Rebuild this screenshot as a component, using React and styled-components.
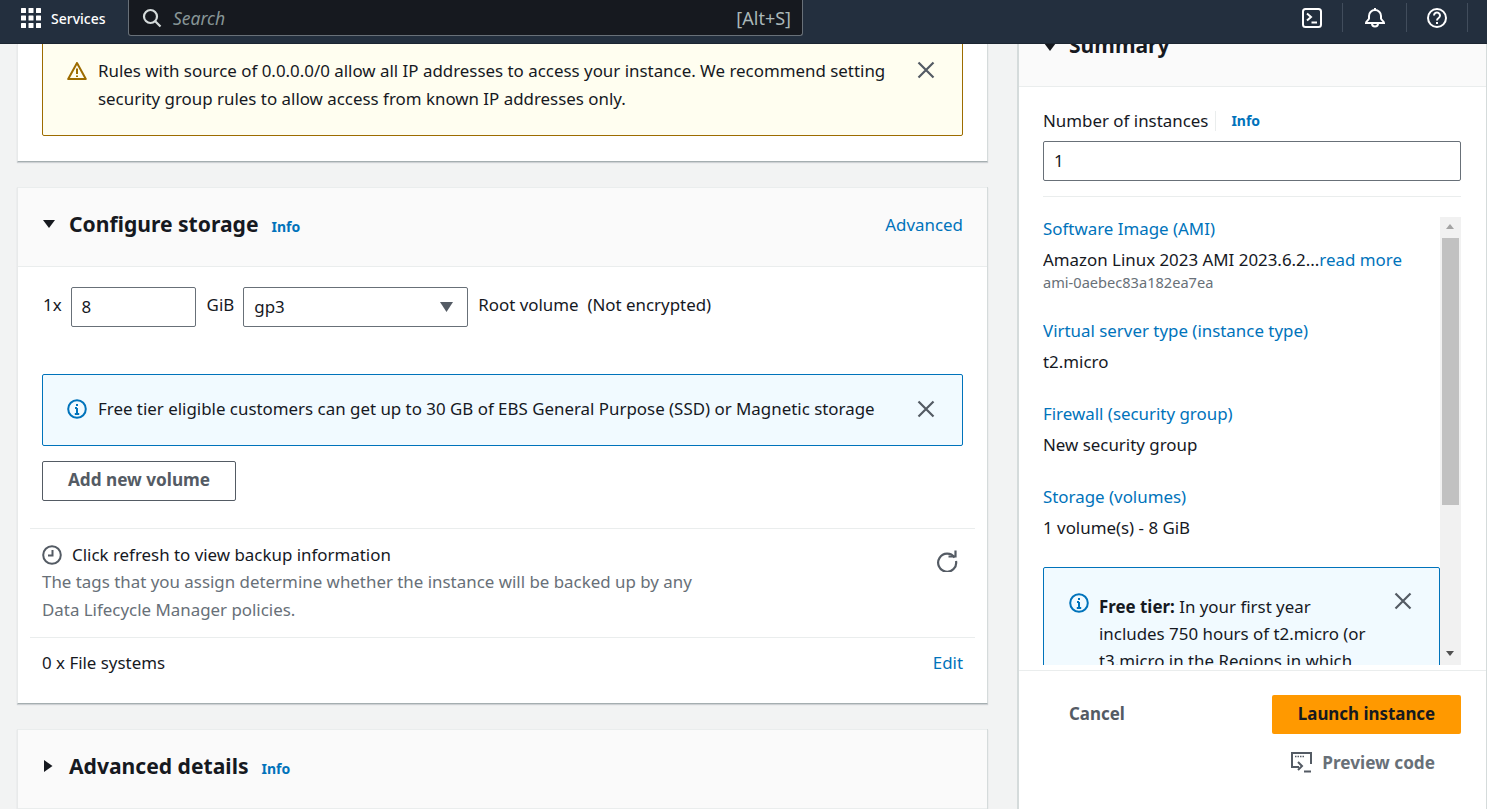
import React from "react";
import styled, { createGlobalStyle } from "styled-components";

const Global = createGlobalStyle`
  html, body { margin: 0; padding: 0; height: 100%; overflow: hidden; background: #f2f3f3; }
  * { box-sizing: border-box; }
  body { font-family: "Noto Sans", "Open Sans", sans-serif; font-size: 16.9px; color: #16191f; }
`;

const Page = styled.div`
  width: 1487px;
  height: 809px;
  overflow: hidden;
  display: flex;
  flex-direction: column;
`;

const Nav = styled.header`
  position: relative;
  z-index: 2;
  flex: none;
  height: 44px;
  background: #232f3e;
  border-bottom: 1px solid #1b2531;
  display: flex;
  align-items: flex-start;
  color: #fff;
`;
const ServicesButton = styled.div`
  width: 128px;
  height: 36px;
  padding-left: 21px;
  display: flex;
  align-items: center;
  gap: 10px;
  font-size: 14px;
  font-weight: 500;
`;
const SearchBox = styled.div`
  width: 675px;
  height: 36px;
  background: #16191f;
  border: 1px solid #687078;
  border-top: 0;
  border-radius: 0 0 3px 3px;
  display: flex;
  align-items: center;
  padding: 0 11px 0 13px;
`;
const SearchHint = styled.span`
  flex: 1;
  margin-left: 11px;
  font-style: italic;
  font-size: 17.5px;
  color: #879596;
`;
const Shortcut = styled.span`
  font-size: 18px;
  color: #aab7b8;
`;
const NavIcons = styled.div`
  margin-left: auto;
  display: flex;
  height: 32px;
  margin-right: 19px;
`;
const NavIcon = styled.div`
  width: ${(p) => p.$width}px;
  height: 29px;
  margin-top: 3px;
  border-right: 1px solid #414d5c;
  display: flex;
  align-items: center;
  justify-content: center;
`;

const Body = styled.main`
  flex: 1;
  min-height: 0;
  display: flex;
  align-items: flex-start;
  padding-left: 17px;
`;
const LeftColumn = styled.div`
  width: 971px;
  flex: none;
  display: flex;
  flex-direction: column;
  gap: 25px;
`;
const Card = styled.section`
  background: #fff;
  border-right: 1px solid #d5dbdb;
  border-left: 1px solid #e8eaea;
  border-bottom: 1px solid #a5aeb0;
  box-shadow: 0 1px 1px rgba(0, 22, 43, 0.15);
`;
const TopCardBody = styled.div`
  padding: 0 24px 25px;
`;
const CardHeader = styled.div`
  height: 80px;
  background: #fafafa;
  border-bottom: 1px solid #eaeded;
  border-top: 1px solid #eaeded;
  padding: 0 24px;
  display: flex;
  align-items: center;
`;
const HeaderTitle = styled.h2`
  margin: 0 0 6px;
  font-size: 21.1px;
  line-height: 30px;
  font-weight: 700;
  color: #16191f;
`;
const Caret = styled.svg`
  width: 14px;
  height: 14px;
  margin-right: 13px;
  flex: none;
  margin-bottom: 7px;
`;
const SummaryCaret = styled(Caret)`
  margin: 10px 12px 0 0;
`;
const InfoLink = styled.a`
  font-size: 14px;
  font-weight: 700;
  color: #0073bb;
  margin-left: 13px;
  line-height: 20px;
`;
const Link = styled.a`
  color: #0073bb;
  font-size: 16.9px;
`;
const HeaderLink = styled(Link)`
  margin-left: auto;
  margin-bottom: 6px;
`;

const Alert = styled.div`
  position: relative;
  display: flex;
  align-items: ${(p) => (p.$center ? "center" : "flex-start")};
  background: ${(p) => (p.$warning ? "#fffef0" : "#f1faff")};
  border: 1px solid ${(p) => (p.$warning ? "#9d6c00" : "#0073bb")};
  border-radius: 2px;
  font-size: 16.9px;
  line-height: 28px;
`;
const WarningAlert = styled(Alert)`
  height: 101px;
  margin-top: -9px;
  padding: 21px 26px 0 24px;
`;
const StorageAlert = styled(Alert)`
  height: 72px;
  padding: 0 26px 2px 24px;
  margin-top: 47px;
`;
const AlertIcon = styled.svg`
  width: 20px;
  height: 20px;
  flex: none;
  margin-right: ${(p) => p.$gap || 11}px;
  margin-top: ${(p) => p.$top || 0}px;
`;
const AlertText = styled.div`
  flex: 1;
  padding-right: ${(p) => p.$reserve || 0}px;
`;
const CloseIcon = styled.svg`
  width: 20px;
  height: 20px;
  flex: none;
  margin-top: ${(p) => p.$top || 0}px;
`;

const StorageBody = styled.div`
  padding: 20px 24px 0;
`;
const VolumeRow = styled.div`
  display: flex;
  align-items: flex-start;
  font-size: 16.9px;
  height: 40px;
`;
const VolumeLabel = styled.span`
  line-height: 36px;
  margin: ${(p) => p.$margin};
`;
const TextBox = styled.div`
  width: ${(p) => p.$width || "100%"};
  height: 40px;
  margin-top: ${(p) => p.$top || 0}px;
  border: 1px solid #687078;
  border-radius: 2px;
  background: #fff;
  display: flex;
  align-items: center;
  justify-content: space-between;
  padding: 0 10px 2px;
  font-size: 16.9px;
  flex: none;
`;
const SelectCaret = styled.svg`
  width: 13px;
  height: 10px;
  margin: 2px 4px 0 0;
`;
const SecondaryButton = styled.div`
  width: 194px;
  height: 40px;
  margin-top: 15px;
  padding-bottom: 3px;
  border: 1px solid #545b64;
  border-radius: 2px;
  display: flex;
  align-items: center;
  justify-content: center;
  font-weight: 700;
  color: #545b64;
  font-size: 17.2px;
`;
const Divider = styled.div`
  height: 1px;
  margin: ${(p) => p.$margin};
  background: #eaeded;
`;
const BackupRow = styled.div`
  display: flex;
  justify-content: space-between;
  padding: 12px 24px 0;
  height: 108px;
`;
const BackupTitle = styled.div`
  display: flex;
  align-items: center;
  gap: 10px;
  font-size: 16.9px;
  line-height: 27px;
`;
const BackupNote = styled.div`
  color: #687078;
  font-size: 16.9px;
  line-height: 27.5px;
  width: 665px;
`;
const RefreshIcon = styled.svg`
  width: 22px;
  height: 22px;
  margin: 9px 5px 0 0;
`;
const FilesRow = styled.div`
  display: flex;
  justify-content: space-between;
  align-items: center;
  padding: 0 24px 16px;
  height: 65px;
  font-size: 16.9px;
`;

const SidePanel = styled.aside`
  width: 470px;
  height: 765px;
  margin-left: 29px;
  flex: none;
  background: #fff;
  border-left: 2px solid #d5dbdb;
  border-right: 1px solid #d5dbdb;
  display: flex;
  flex-direction: column;
`;
const SummaryHeader = styled.div`
  flex: none;
  height: 84px;
  margin-top: -41px;
  background: #fafafa;
  border-bottom: 1px solid #eaeded;
  padding: 27px 24px 0;
  display: flex;
  align-items: flex-start;
`;
const SideBody = styled.div`
  flex: none;
  height: 583px;
  position: relative;
  overflow: hidden;
  padding: 20px 25px 0 24px;
`;
const FieldLabel = styled.div`
  display: flex;
  align-items: center;
  font-size: 16.9px;
  line-height: 28px;
`;
const FieldInfo = styled.a`
  font-size: 14px;
  font-weight: 700;
  color: #0073bb;
  margin-left: 7px;
  padding-left: 15px;
  border-left: 1px solid #eaeded;
  line-height: 20px;
`;
const SideDivider = styled.div`
  height: 1px;
  background: #eaeded;
  margin: 15px 0 18px;
`;
const SummaryList = styled.div`
  width: 397px;
  height: 450px;
  overflow: hidden;
`;
const SummaryItem = styled.div`
  margin-bottom: ${(p) => p.$gap}px;
`;
const ItemValue = styled.div`
  font-size: 16.9px;
  line-height: 27.5px;
  margin-top: 3px;
  white-space: nowrap;
`;
const ItemLink = styled.div`
  color: #0073bb;
  font-size: 16.9px;
  line-height: 27.5px;
`;
const AmiId = styled.div`
  font-size: 14.6px;
  line-height: 19px;
  color: #687078;
`;
const FreeAlert = styled(Alert)`
  height: 140px;
  padding: 25px 26px 0 25px;
  line-height: 27px;
`;
const ScrollTrack = styled.div`
  position: absolute;
  left: 421px;
  top: 130px;
  width: 21px;
  height: 448px;
  background: #f1f1f1;
`;
const ScrollThumb = styled.div`
  position: absolute;
  left: 2px;
  top: 21px;
  width: 17px;
  height: 267px;
  background: #c1c1c1;
`;
const ScrollArrow = styled.div`
  position: absolute;
  left: 6px;
  ${(p) => (p.$down ? "bottom: 9px;" : "top: 7px;")}
  width: 0;
  height: 0;
  border-left: 4.5px solid transparent;
  border-right: 4.5px solid transparent;
  ${(p) => (p.$down ? "border-top: 5px solid #505050;" : "border-bottom: 5px solid #a3a3a3;")}
`;
const SideFooter = styled.div`
  flex: 1;
  border-top: 1px solid #eaeded;
  padding: 24px 25px 0;
  display: flex;
  flex-direction: column;
  align-items: flex-end;
`;
const FooterRow = styled.div`
  width: 100%;
  display: flex;
  justify-content: space-between;
  align-items: center;
`;
const CancelText = styled.span`
  font-weight: 700;
  color: #545b64;
  font-size: 16.9px;
  margin: 0 0 2px 25px;
`;
const PrimaryButton = styled.div`
  width: 189px;
  height: 39px;
  padding-bottom: 2px;
  background: #ff9900;
  border-radius: 2px;
  display: flex;
  align-items: center;
  justify-content: center;
  font-weight: 700;
  color: #16191f;
  font-size: 16.9px;
`;
const PreviewButton = styled.div`
  display: flex;
  align-items: center;
  gap: 10px;
  margin: 17px 26px 0 0;
  font-weight: 700;
  color: #687078;
  font-size: 17.2px;
`;

const InfoCircle = ({ top, gap }) => (
  <AlertIcon $top={top} $gap={gap} viewBox="0 0 20 20" fill="none" stroke="#0073bb" strokeWidth="2">
    <circle cx="10" cy="10" r="8.8" />
    <path d="M10 9v6M7.8 15h4.4M8 9h2" />
    <rect x="9" y="5" width="2" height="2" fill="#0073bb" stroke="none" />
  </AlertIcon>
);
const Close = ({ top }) => (
  <CloseIcon $top={top} viewBox="0 0 20 20" fill="none" stroke="#545b64" strokeWidth="2.2">
    <path d="M2.5 2.5l15 15M17.5 2.5l-15 15" />
  </CloseIcon>
);

export default function App() {
  return (
    <Page>
      <Global />
      <Nav>
        <ServicesButton>
          <svg width="20" height="20" viewBox="0 0 20 20" fill="#fff">
            {[0, 7.5, 15].flatMap((y) =>
              [0, 7.5, 15].map((x) => <rect key={`${x}-${y}`} x={x} y={y} width="5" height="5" rx="0.5" />)
            )}
          </svg>
          Services
        </ServicesButton>
        <SearchBox>
          <svg width="20" height="20" viewBox="0 0 20 20" fill="none" stroke="#d5dbdb" strokeWidth="2.2">
            <circle cx="8.5" cy="8.5" r="6.5" />
            <path d="M13.2 13.2l5.3 5.3" />
          </svg>
          <SearchHint>Search</SearchHint>
          <Shortcut>[Alt+S]</Shortcut>
        </SearchBox>
        <NavIcons>
          <NavIcon $width={61}>
            <svg width="20" height="20" viewBox="0 0 20 20" fill="none" stroke="#fff" strokeWidth="2">
              <rect x="1" y="1" width="18" height="18" rx="2.5" />
              <path d="M5 5.5l4 3.5-4 3.5M9.5 14.5h5.5" />
            </svg>
          </NavIcon>
          <NavIcon $width={64}>
            <svg width="20" height="20" viewBox="0 0 20 20" fill="none" stroke="#fff" strokeWidth="2">
              <path d="M1 15h18c0-2-2.5-2.5-3-4.5V8a6 6 0 0 0-12 0v2.5C3.5 12.5 1 13 1 15z" />
              <path d="M7 15.5a3 3 0 0 0 6 0M10 0v2" />
            </svg>
          </NavIcon>
          <NavIcon $width={61}>
            <svg width="20" height="20" viewBox="0 0 20 20" fill="none" stroke="#fff" strokeWidth="2">
              <circle cx="10" cy="10" r="9" />
              <path d="M7 7.5a3 3 0 1 1 4.6 2.5c-1 .7-1.6 1.2-1.6 2.5" />
              <rect x="9" y="14" width="2" height="2" fill="#fff" stroke="none" />
            </svg>
          </NavIcon>
        </NavIcons>
      </Nav>
      <Body>
        <LeftColumn>
          <Card>
            <TopCardBody>
              <WarningAlert $warning>
                <AlertIcon $top={4} viewBox="0 0 20 20" fill="none" stroke="#9d6c00" strokeWidth="2" strokeLinejoin="round">
                  <path d="M10 2L1.2 18h17.6z" />
                  <path d="M10 7.5v5.5M10 14.5v1.6" />
                </AlertIcon>
                <AlertText>
                  Rules with source of 0.0.0.0/0 allow all IP addresses to access your instance. We recommend setting
                  security group rules to allow access from known IP addresses only.
                </AlertText>
                <Close top={3} />
              </WarningAlert>
            </TopCardBody>
          </Card>
          <Card>
            <CardHeader>
              <Caret viewBox="0 0 14 14" fill="#16191f"><path d="M1 3h12L7 11z" /></Caret>
              <HeaderTitle>Configure storage</HeaderTitle>
              <InfoLink>Info</InfoLink>
              <HeaderLink>Advanced</HeaderLink>
            </CardHeader>
            <StorageBody>
              <VolumeRow>
                <VolumeLabel $margin="0 9px 0 1px">1x</VolumeLabel>
                <TextBox $width="125px">8</TextBox>
                <VolumeLabel $margin="0 9px 0 11px">GiB</VolumeLabel>
                <TextBox $width="225px">
                  gp3
                  <SelectCaret viewBox="0 0 13 10" fill="#545b64"><path d="M0 0h13L6.5 10z" /></SelectCaret>
                </TextBox>
                <VolumeLabel $margin="0 0 0 10px">Root volume&nbsp; (Not encrypted)</VolumeLabel>
              </VolumeRow>
              <StorageAlert $center>
                <InfoCircle />
                <AlertText>Free tier eligible customers can get up to 30 GB of EBS General Purpose (SSD) or Magnetic storage</AlertText>
                <Close />
              </StorageAlert>
              <SecondaryButton>Add new volume</SecondaryButton>
            </StorageBody>
            <Divider $margin="27px 12px 0" />
            <BackupRow>
              <div>
                <BackupTitle>
                  <svg width="20" height="20" viewBox="0 0 20 20" fill="none" stroke="#545b64" strokeWidth="2">
                    <circle cx="10" cy="10" r="8.8" />
                    <path d="M10.5 5v5.5H6" />
                  </svg>
                  Click refresh to view backup information
                </BackupTitle>
                <BackupNote>
                  The tags that you assign determine whether the instance will be backed up by any Data Lifecycle Manager policies.
                </BackupNote>
              </div>
              <RefreshIcon viewBox="0 0 22 22" fill="none" stroke="#545b64" strokeWidth="2.2">
                <path d="M18.5 7.5A9 9 0 1 0 20 11" />
                <path d="M12.5 6.500h7v-6" />
              </RefreshIcon>
            </BackupRow>
            <Divider $margin="0 12px" />
            <FilesRow>
              0 x File systems
              <Link>Edit</Link>
            </FilesRow>
          </Card>
          <Card>
            <CardHeader>
              <Caret viewBox="0 0 14 14" fill="#16191f"><path d="M2 1v12l8.5-6z" /></Caret>
              <HeaderTitle>Advanced details</HeaderTitle>
              <InfoLink>Info</InfoLink>
            </CardHeader>
          </Card>
        </LeftColumn>
        <SidePanel>
          <SummaryHeader>
            <SummaryCaret viewBox="0 0 14 14" fill="#16191f"><path d="M1 3h12L7 11z" /></SummaryCaret>
            <HeaderTitle>Summary</HeaderTitle>
          </SummaryHeader>
          <SideBody>
            <FieldLabel>
              Number of instances
              <FieldInfo>Info</FieldInfo>
            </FieldLabel>
            <TextBox $top={6}>1</TextBox>
            <SideDivider />
            <SummaryList>
              <SummaryItem $gap={25}>
                <ItemLink>Software Image (AMI)</ItemLink>
                <ItemValue>Amazon Linux 2023 AMI 2023.6.2...<Link>read more</Link></ItemValue>
                <AmiId>ami-0aebec83a182ea7ea</AmiId>
              </SummaryItem>
              <SummaryItem $gap={25}>
                <ItemLink>Virtual server type (instance type)</ItemLink>
                <ItemValue>t2.micro</ItemValue>
              </SummaryItem>
              <SummaryItem $gap={25}>
                <ItemLink>Firewall (security group)</ItemLink>
                <ItemValue>New security group</ItemValue>
              </SummaryItem>
              <SummaryItem $gap={26}>
                <ItemLink>Storage (volumes)</ItemLink>
                <ItemValue>1 volume(s) - 8 GiB</ItemValue>
              </SummaryItem>
              <FreeAlert>
                <InfoCircle gap={10} />
                <AlertText $reserve={21}>
                  <b>Free tier:</b> In your first year includes 750 hours of t2.micro (or t3.micro in the Regions in which t2.micro is unavailable)
                </AlertText>
                <Close top={-2} />
              </FreeAlert>
            </SummaryList>
            <ScrollTrack>
              <ScrollArrow />
              <ScrollThumb />
              <ScrollArrow $down />
            </ScrollTrack>
          </SideBody>
          <SideFooter>
            <FooterRow>
              <CancelText>Cancel</CancelText>
              <PrimaryButton>Launch instance</PrimaryButton>
            </FooterRow>
            <PreviewButton>
              <svg width="21" height="21" viewBox="0 0 21 21" fill="none" stroke="#545b64" strokeWidth="2">
                <path d="M8 15H1V1h19v11" />
                <path d="M4 4.500h9" strokeDasharray="1.5 1" strokeWidth="1.5" />
                <path d="M7 10l4 4-4 4M13 19.500h7" />
              </svg>
              Preview code
            </PreviewButton>
          </SideFooter>
        </SidePanel>
      </Body>
    </Page>
  );
}
